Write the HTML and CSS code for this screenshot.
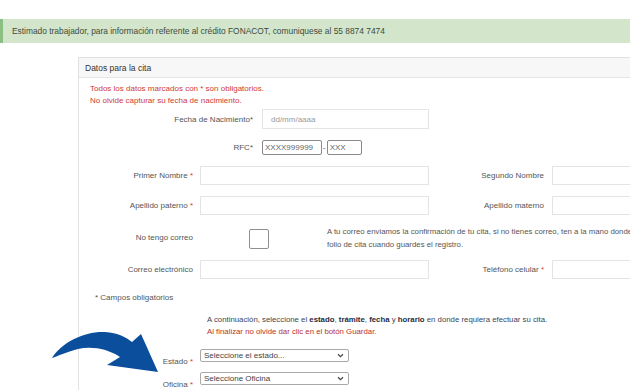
FILE: index.html
```html
<!DOCTYPE html>
<html lang="es">
  <head>
    <meta charset="UTF-8" />
    <meta name="viewport" content="width=device-width, initial-scale=1.0" />
    <title>Datos para la cita</title>
    <link rel="stylesheet" href="styles.css">
  </head>
  <body>
    <div class="aviso">
      Estimado trabajador, para información referente al crédito FONACOT, comuniquese al 55 8874 7474
    </div>

    <section class="panel">
      <div class="panel-titulo">Datos para la cita</div>
      <div class="panel-cuerpo">
        <p class="nota">
          Todos los datos marcados con * son obligatorios.<br />
          No olvide capturar su fecha de nacimiento.
        </p>

        <div class="fila fila-fecha">
          <label class="etq etq-ancha">Fecha de Nacimiento*</label>
          <input class="campo campo-fecha" type="text" placeholder="dd/mm/aaaa" />
        </div>

        <div class="fila fila-rfc">
          <label class="etq etq-ancha">RFC*</label>
          <input class="rfc rfc-1" type="text" placeholder="XXXX999999" />
          <span class="guion">-</span>
          <input class="rfc rfc-2" type="text" placeholder="XXX" />
        </div>

        <div class="fila">
          <label class="etq">Primer Nombre <span class="req">*</span></label>
          <input class="campo" type="text" />
          <label class="etq etq-der">Segundo Nombre</label>
          <input class="campo campo-der" type="text" />
        </div>

        <div class="fila">
          <label class="etq">Apellido paterno <span class="req">*</span></label>
          <input class="campo" type="text" />
          <label class="etq etq-der">Apellido materno</label>
          <input class="campo campo-der" type="text" />
        </div>

        <div class="fila fila-check">
          <label class="etq">No tengo correo</label>
          <input class="caja" type="checkbox" />
          <p class="aviso-correo">
            A tu correo enviamos la confirmación de tu cita, si no tienes correo, ten a la mano donde<br />
            folio de cita cuando guardes el registro.
          </p>
        </div>

        <div class="fila">
          <label class="etq">Correo electrónico</label>
          <input class="campo" type="text" />
          <label class="etq etq-der">Teléfono celular <span class="req">*</span></label>
          <input class="campo campo-der" type="text" />
        </div>

        <p class="obligatorios">* Campos obligatorios</p>

        <p class="instrucciones">
          A continuación, seleccione el <b>estado</b>, <b>trámite</b>, <b>fecha</b> y <b>horario</b> en donde requiera efectuar su cita.<br />
          <span class="rojo">Al finalizar no olvide dar clic en el botón Guardar.</span>
        </p>

        <div class="fila fila-sel">
          <label class="etq">Estado <span class="req">*</span></label>
          <div class="sel">
            <span>Seleccione el estado...</span>
            <svg viewBox="0 0 8 6" width="7" height="5"><path d="M1 1.5 L4 4.5 L7 1.5" fill="none" stroke="#444" stroke-width="1.4"/></svg>
          </div>
        </div>

        <div class="fila fila-sel">
          <label class="etq">Oficina <span class="req">*</span></label>
          <div class="sel">
            <span>Seleccione Oficina</span>
            <svg viewBox="0 0 8 6" width="7" height="5"><path d="M1 1.5 L4 4.5 L7 1.5" fill="none" stroke="#444" stroke-width="1.4"/></svg>
          </div>
        </div>
      </div>
    </section>

    <!-- flecha azul que apunta a los selectores -->
    <svg class="flecha" viewBox="40 325 130 55" width="130" height="55">
      <path d="M52,358 C62,342 85,331 105,332 C118,333 126,337 132,342 L141,334 L158,372 L107,365 L120,357 C108,349 92,346 78,349 C66,352 58,356 52,358 Z" fill="#0b4f9c"/>
    </svg>
  </body>
</html>
```

FILE: styles.css
```css
* {
  box-sizing: border-box;
  margin: 0;
  padding: 0;
}

html,
body {
  width: 630px;
  height: 390px;
  overflow: hidden;
}

body {
  position: relative;
  background: #fff;
  font-family: "Liberation Sans", Arial, sans-serif;
  font-size: 8px;
  color: #555;
}

.aviso {
  margin-top: 19px;
  height: 24px;
  line-height: 24px;
  padding-left: 9px;
  background: #d3e6cb;
  border-left: 3px solid #8cbf82;
  font-size: 8.4px;
  color: #3d4a3d;
  white-space: nowrap;
}

.panel {
  width: 720px;
  margin: 14px 0 0 78px;
  border: 1px solid #e2e2e2;
  height: 400px;
}

.panel-titulo {
  height: 20px;
  line-height: 20px;
  padding-left: 6px;
  background: #f7f7f7;
  border-bottom: 1px solid #e6e6e6;
  font-size: 8.5px;
  color: #333;
}

.panel-cuerpo {
  padding-top: 5px;
}

.nota {
  margin-left: 11px;
  line-height: 12px;
  color: #cf3a32;
}

.fila {
  display: flex;
  align-items: center;
  margin-top: 11px;
}

.etq {
  width: 114px;
  text-align: right;
  white-space: nowrap;
}

.etq-ancha {
  width: 174px;
  margin-right: 2px;
}

.etq-der {
  width: 115px;
}

.req {
  color: #d23c34;
}

.campo {
  width: 229px;
  height: 19px;
  margin-left: 7px;
  border: 1px solid #e4e4e4;
  font: inherit;
  padding-left: 8px;
  outline: none;
}

.campo-der {
  margin-left: 8px;
  width: 150px;
}

.campo-fecha {
  width: 167px;
  height: 20px;
}

.fila-fecha {
  margin-top: 2px;
}

.campo::placeholder {
  color: #9a9a9a;
}

.rfc {
  height: 15px;
  margin-left: 7px;
  border: 1px solid #8a8a8a;
  border-radius: 2px;
  font: inherit;
  padding-left: 2px;
}

.rfc::placeholder {
  color: #666;
}

.rfc-1 {
  width: 60px;
}

.rfc-2 {
  width: 35px;
  margin-left: 1px;
}

.guion {
  margin-left: 1px;
  color: #555;
}

.fila-check {
  height: 20px;
  margin-top: 14px;
  align-items: flex-start;
}

.fila-check .etq {
  line-height: 17px;
}

.caja {
  appearance: none;
  width: 20px;
  height: 20px;
  margin-left: 56px;
  border: 1px solid #8f8f8f;
  border-radius: 2px;
  background: #fff;
}

.aviso-correo {
  margin-left: 58px;
  margin-top: -4px;
  line-height: 13px;
  font-size: 7.8px;
  white-space: nowrap;
}

.obligatorios {
  margin: 13px 0 0 16px;
  line-height: 12px;
}

.instrucciones {
  margin: 10px 0 0 128px;
  line-height: 12px;
  font-size: 7.8px;
  color: #3d4656;
  white-space: nowrap;
}

.instrucciones b {
  color: #1f2b40;
}

.rojo {
  color: #b8322e;
}

.fila-sel {
  align-items: flex-end;
  margin-top: 11px;
}

.fila-sel + .fila-sel {
  margin-top: 10px;
}

.fila-sel .etq {
  position: relative;
  top: 4px;
}

.sel {
  display: flex;
  align-items: center;
  justify-content: space-between;
  width: 149px;
  height: 13px;
  margin-left: 7px;
  padding: 0 4px 0 3px;
  border: 1px solid #a9a9a9;
  border-radius: 2px;
  color: #444;
  background: #fff;
}

.flecha {
  position: absolute;
  left: 40px;
  top: 325px;
}
```
